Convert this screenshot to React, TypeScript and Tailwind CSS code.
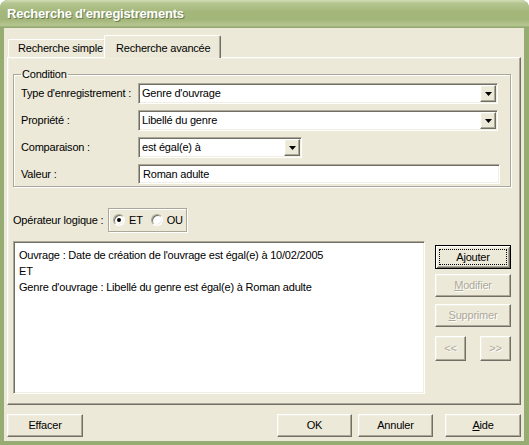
import React from "react";

const raised =
  "border border-t-white border-l-white border-r-[#716F64] border-b-[#716F64] shadow-[inset_-1px_-1px_0_#ACA899,inset_1px_1px_0_#F1EFE2]";
const sunken =
  "border border-t-[#ACA899] border-l-[#ACA899] border-r-white border-b-white shadow-[inset_1px_1px_0_#716F64,inset_-1px_-1px_0_#F1EFE2]";
const etched =
  "border border-[#ACA899] shadow-[inset_1px_1px_0_#ffffff,1px_1px_0_#ffffff]";

function Arrow() {
  return (
    <svg width="7" height="4" viewBox="0 0 7 4">
      <path d="M0 0H7L3.5 4Z" fill="#000" />
    </svg>
  );
}

function Combo({ value, className = "" }: { value: string; className?: string }) {
  return (
    <div className={`h-[21px] flex items-center bg-white ${sunken} ${className}`}>
      <span className="flex-1 pl-[3px] whitespace-nowrap overflow-hidden">{value}</span>
      <div className={`w-[16px] h-[17px] mr-[1px] bg-[#ECE9D8] flex items-center justify-center ${raised}`}>
        <Arrow />
      </div>
    </div>
  );
}

function Btn({
  children,
  className = "",
  disabled = false,
}: {
  children: React.ReactNode;
  className?: string;
  disabled?: boolean;
}) {
  return (
    <div
      className={`h-[23px] flex items-center justify-center bg-[#ECE9D8] ${raised} ${
        disabled ? "text-[#ACA899] [text-shadow:1px_1px_0_#ffffff]" : "text-black"
      } ${className}`}
    >
      {children}
    </div>
  );
}

function Radio({ checked, label }: { checked: boolean; label: string }) {
  return (
    <div className="flex items-center gap-[4px]">
      <span className="w-[12px] h-[12px] rounded-full bg-white flex items-center justify-center border border-t-[#ACA899] border-l-[#ACA899] border-r-white border-b-white shadow-[inset_1px_1px_0_#716F64,inset_-1px_-1px_0_#F1EFE2]">
        {checked && <span className="w-[4px] h-[4px] rounded-full bg-black" />}
      </span>
      <span>{label}</span>
    </div>
  );
}

export default function App() {
  return (
    <div className="w-[529px] h-[445px] flex flex-col rounded-t-[8px] overflow-hidden bg-[#97AC73] font-['Liberation_Sans',Arial,sans-serif] text-[11px] text-black">
      {/* Title bar */}
      <div className="h-[28px] shrink-0 flex items-center pl-[7px] bg-[linear-gradient(to_bottom,#D2DDB4_0%,#B5C590_12%,#A5B87C_40%,#A3B679_70%,#B6C691_90%,#8CA167_100%)]">
        <span className="text-white font-bold text-[13px] [text-shadow:1px_1px_0_#6E7F50] tracking-[-0.2px]">
          Recherche d'enregistrements
        </span>
      </div>

      {/* Client area */}
      <div className="flex-1 ml-[4px] mr-[5px] mb-[4px] bg-[#ECE9D8] flex flex-col tracking-[-0.2px]">
        {/* Tabs */}
        <div className="mt-[7px] pl-[4px] h-[22px] flex items-end">
          <div className="w-[98px] h-[18px] flex items-center pl-[9px] whitespace-nowrap border-t border-l border-t-white border-l-white border-r border-r-[#716F64] shadow-[inset_-1px_0_0_#ACA899] rounded-t-[2px]">
            Recherche simple
          </div>
          <div className="relative z-10 -ml-[2px] w-[117px] h-[23px] -mb-[1px] bg-[#ECE9D8] flex items-start pt-[4px] pl-[11px] whitespace-nowrap border-t border-l border-t-white border-l-white border-r border-r-[#716F64] shadow-[inset_-1px_0_0_#ACA899] rounded-t-[2px]">
            Recherche avancée
          </div>
        </div>

        {/* Panel */}
        <div className={`ml-[3px] w-[514px] h-[348px] pt-[10px] pl-[5px] ${raised}`}>
          <fieldset className={`w-[498px] pl-[7px] pr-[12px] pb-[2px] ${etched}`}>
            <legend className="px-[1px] leading-[13px]">Condition</legend>
            <div className="mt-[2px] flex flex-col gap-[6px]">
              <div className="flex items-center">
                <span className="w-[117px]">Type d'enregistrement :</span>
                <Combo value="Genre d'ouvrage" className="flex-1" />
              </div>
              <div className="flex items-center">
                <span className="w-[117px]">Propriété :</span>
                <Combo value="Libellé du genre" className="flex-1" />
              </div>
              <div className="flex items-center">
                <span className="w-[117px]">Comparaison :</span>
                <Combo value="est égal(e) à" className="w-[164px]" />
              </div>
              <div className="flex items-center">
                <span className="w-[117px]">Valeur :</span>
                <div className={`flex-1 -mr-[2px] h-[20px] bg-white flex items-center pl-[4px] ${sunken}`}>
                  Roman adulte
                </div>
              </div>
            </div>
          </fieldset>

          {/* Operator */}
          <div className="mt-[21px] flex items-center">
            <span className="w-[95px]">Opérateur logique :</span>
            <div className={`w-[79px] h-[24px] flex items-center pl-[4px] gap-[8px] ${etched}`}>
              <Radio checked label="ET" />
              <Radio checked={false} label="OU" />
            </div>
          </div>

          {/* List + buttons */}
          <div className="mt-[9px] flex">
            <div className={`w-[412px] h-[153px] bg-white pt-[5px] pl-[5px] leading-[16px] ${sunken}`}>
              <div>Ouvrage : Date de création de l'ouvrage est égal(e) à 10/02/2005</div>
              <div>ET</div>
              <div>Genre d'ouvrage : Libellé du genre est égal(e) à Roman adulte</div>
            </div>
            <div className="ml-[10px] w-[76px] pt-[4px] flex flex-col">
              <div className="h-[24px] border border-black shadow-[inset_1px_1px_0_#ffffff,inset_-1px_-1px_0_#716F64,inset_2px_2px_0_#F1EFE2,inset_-2px_-2px_0_#ACA899] p-[3px] flex">
                <div className="flex-1 border border-dotted border-black flex items-center justify-center">
                  Ajouter
                </div>
              </div>
              <Btn disabled className="mt-[5px]">
                <span><span className="underline">M</span>odifier</span>
              </Btn>
              <Btn disabled className="mt-[7px]">
                <span><span className="underline">S</span>upprimer</span>
              </Btn>
              <div className="mt-[9px] flex justify-between">
                <Btn disabled className="w-[31px] h-[25px]">&lt;&lt;</Btn>
                <Btn disabled className="w-[31px] h-[25px]">&gt;&gt;</Btn>
              </div>
            </div>
          </div>
        </div>

        {/* Footer buttons */}
        <div className="mt-[9px] pl-[3px] pr-[3px] flex">
          <Btn className="w-[76px]">Effacer</Btn>
          <Btn className="w-[75px] ml-auto">OK</Btn>
          <Btn className="w-[75px] ml-[6px]">Annuler</Btn>
          <Btn className="w-[76px] ml-[12px]">
            <span><span className="underline">A</span>ide</span>
          </Btn>
        </div>
      </div>
    </div>
  );
}
